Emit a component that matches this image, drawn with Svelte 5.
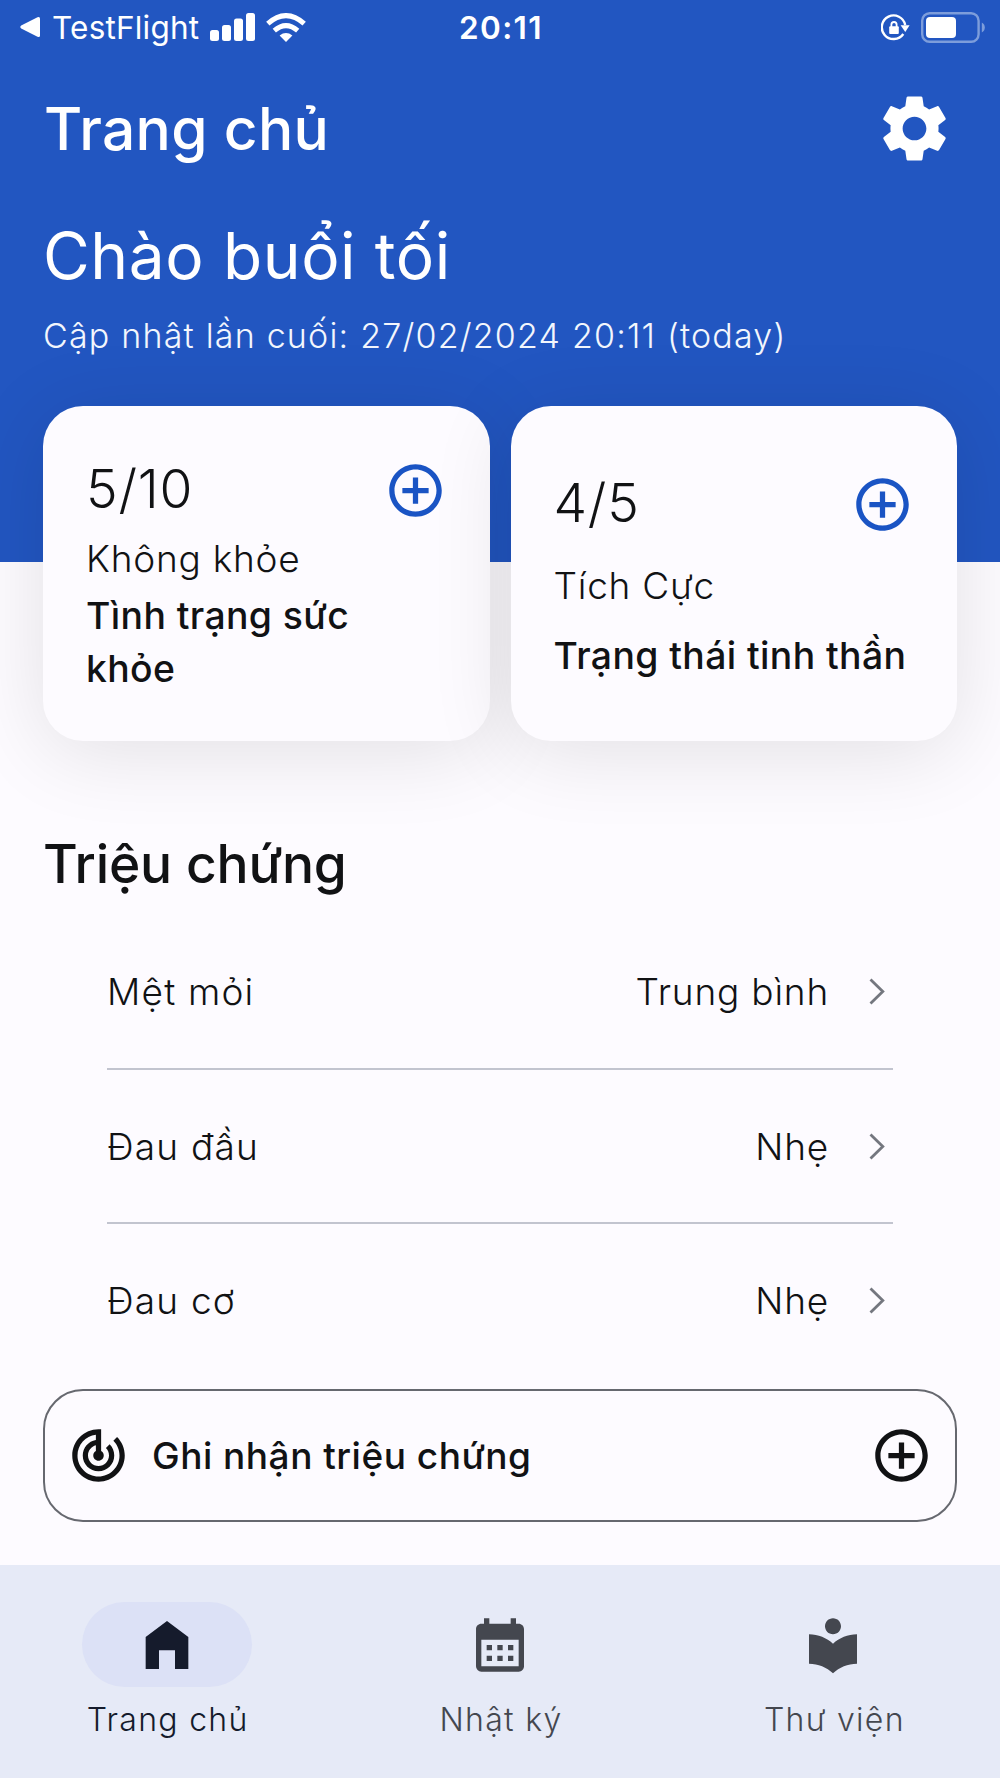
<script>
	const cards = [
		{ score: '5/10', status: 'Không khỏe', title: 'Tình trạng sức khỏe' },
		{ score: '4/5', status: 'Tích Cực', title: 'Trạng thái tinh thần' }
	];

	const symptoms = [
		{ name: 'Mệt mỏi', level: 'Trung bình' },
		{ name: 'Đau đầu', level: 'Nhẹ' },
		{ name: 'Đau cơ', level: 'Nhẹ' }
	];

	const tabs = [
		{ id: 'home', label: 'Trang chủ', icon: 'M12 3L4 9v12h5v-7h6v7h5V9z' },
		{
			id: 'diary',
			label: 'Nhật ký',
			icon: 'M19 4h-1V2h-2v2H8V2H6v2H5c-1.11 0-1.99.9-1.99 2L3 20a2 2 0 0 0 2 2h14c1.1 0 2-.9 2-2V6c0-1.1-.9-2-2-2zm0 16H5V10h14v10zM9 14H7v-2h2v2zm4 0h-2v-2h2v2zm4 0h-2v-2h2v2zm-8 4H7v-2h2v2zm4 0h-2v-2h2v2zm4 0h-2v-2h2v2z'
		},
		{
			id: 'library',
			label: 'Thư viện',
			icon: 'M12 11.55C9.64 9.35 6.48 8 3 8v11c3.48 0 6.64 1.35 9 3.55 2.36-2.19 5.52-3.55 9-3.55V8c-3.48 0-6.64 1.35-9 3.55zM12 8c1.66 0 3-1.34 3-3s-1.34-3-3-3-3 1.34-3 3 1.34 3 3 3z'
		}
	];

	let active = $state('home');
</script>

{#snippet addIcon()}
	<svg class="icon" viewBox="0 0 24 24" aria-hidden="true">
		<path d="M13 7h-2v4H7v2h4v4h2v-4h4v-2h-4V7zm-1-5C6.48 2 2 6.48 2 12s4.48 10 10 10 10-4.48 10-10S17.52 2 12 2zm0 18c-4.41 0-8-3.59-8-8s3.59-8 8-8 8 3.59 8 8-3.59 8-8 8z" />
	</svg>
{/snippet}

<div class="screen">
	<header class="hero">
		<div class="status-bar">
			<div class="status-left">
				<svg width="20" height="22" viewBox="0 0 20 22" aria-hidden="true">
					<path d="M1.2 9.6 17.5 1.2Q20 .2 20 2.6V19.4Q20 21.8 17.5 20.8L1.2 12.4Q-.6 11 1.2 9.6z" />
				</svg>
				<span class="back-app">TestFlight</span>
				<svg class="signal" width="45" height="28" viewBox="0 0 45 28" aria-hidden="true">
					<rect x="0" y="17" width="9" height="11" rx="2.5" />
					<rect x="12" y="12" width="9" height="16" rx="2.5" />
					<rect x="24" y="5.5" width="9" height="22.5" rx="2.5" />
					<rect x="36" y="0" width="9" height="28" rx="2.5" />
				</svg>
				<svg width="40" height="29" viewBox="0 0 40 29" aria-hidden="true">
					<path d="M20 29 13.6 22.4Q20 17.6 26.4 22.4z" />
					<path class="arc" d="M8.3 17.6Q20 7.6 31.7 17.6" />
					<path class="arc" d="M1.8 10.6Q20 -5.4 38.2 10.6" />
				</svg>
			</div>
			<span class="clock">20:11</span>
			<div class="status-right">
				<svg width="29" height="27" viewBox="0 0 29 27" aria-hidden="true">
					<path class="ring" d="M24.2 11A11.8 11.8 0 1 0 22.3 20" />
					<path d="M19.6 11.3h9L24.3 18z" />
					<rect x="8.2" y="12.2" width="9.6" height="7.8" rx="1" />
					<path class="shackle" d="M10.4 13v-2.4a2.6 2.6 0 0 1 5.2 0V13" />
				</svg>
				<svg width="64" height="31" viewBox="0 0 64 31" aria-hidden="true">
					<rect class="case" x="1.2" y="1.2" width="56.4" height="28.6" rx="7.5" />
					<rect x="5" y="5" width="30" height="21" rx="4" />
					<path class="nub" d="M60.8 10.5q3 1.6 3 5t-3 5z" />
				</svg>
			</div>
		</div>

		<div class="title-row">
			<h1>Trang chủ</h1>
			<svg class="gear" viewBox="0 0 24 24" aria-label="Cài đặt">
				<path d="M19.43 12.98c.04-.32.07-.64.07-.98s-.03-.66-.07-.98l2.11-1.65c.19-.15.24-.42.12-.64l-2-3.46c-.12-.22-.39-.3-.61-.22l-2.49 1c-.52-.4-1.08-.73-1.69-.98l-.38-2.65C14.46 2.18 14.25 2 14 2h-4c-.25 0-.46.18-.49.42l-.38 2.65c-.61.25-1.17.59-1.69.98l-2.49-1c-.23-.09-.49 0-.61.22l-2 3.46c-.13.22-.07.49.12.64l2.11 1.65c-.04.32-.07.65-.07.98s.03.66.07.98l-2.11 1.65c-.19.15-.24.42-.12.64l2 3.46c.12.22.39.3.61.22l2.49-1c.52.4 1.08.73 1.69.98l.38 2.65c.03.24.24.42.49.42h4c.25 0 .46-.18.49-.42l.38-2.65c.61-.25 1.17-.59 1.69-.98l2.49 1c.23.09.49 0 .61-.22l2-3.46c.12-.22.07-.49-.12-.64l-2.11-1.65zM12 15.7c-2.04 0-3.7-1.66-3.7-3.7s1.66-3.7 3.7-3.7 3.7 1.66 3.7 3.7-1.66 3.7-3.7 3.7z" />
			</svg>
		</div>

		<p class="greeting">Chào buổi tối</p>
		<p class="updated">Cập nhật lần cuối: 27/02/2024 20:11 (today)</p>
	</header>

	<section class="cards">
		{#each cards as card (card.title)}
			<article class="card">
				<div class="card-top">
					<span class="score">{card.score}</span>
					{@render addIcon()}
				</div>
				<p class="card-status">{card.status}</p>
				<h3>{card.title}</h3>
			</article>
		{/each}
	</section>

	<main class="symptoms">
		<h2>Triệu chứng</h2>
		<ul>
			{#each symptoms as s (s.name)}
				<li>
					<span>{s.name}</span>
					<span class="level">{s.level}</span>
					<svg class="chevron" width="16" height="27" viewBox="0 0 16 27" aria-hidden="true">
						<path d="M1.5 1.5 13.8 13.5 1.5 25.5" />
					</svg>
				</li>
			{/each}
		</ul>
		<button class="record">
			<svg class="icon" viewBox="0 0 24 24" aria-hidden="true">
				<path d="M19.07 4.93l-1.41 1.41C19.1 7.79 20 9.79 20 12c0 4.42-3.58 8-8 8s-8-3.58-8-8c0-4.08 3.05-7.44 7-7.93v2.02C8.16 6.57 6 9.03 6 12c0 3.31 2.69 6 6 6s6-2.69 6-6c0-1.66-.67-3.16-1.76-4.24l-1.41 1.41C15.55 9.9 16 10.9 16 12c0 2.21-1.79 4-4 4s-4-1.79-4-4c0-1.86 1.28-3.41 3-3.86v2.14c-.6.35-1 .98-1 1.72 0 1.1.9 2 2 2s2-.9 2-2c0-.74-.4-1.38-1-1.72V2h-1C6.48 2 2 6.48 2 12s4.48 10 10 10 10-4.48 10-10c0-2.76-1.12-5.26-2.93-7.07z" />
			</svg>
			<span>Ghi nhận triệu chứng</span>
			{@render addIcon()}
		</button>
	</main>

	<nav>
		{#each tabs as tab (tab.id)}
			<button class="tab" class:active={active === tab.id} onclick={() => (active = tab.id)}>
				<span class="pill">
					<svg class="icon" viewBox="0 0 24 24" aria-hidden="true"><path d={tab.icon} /></svg>
				</span>
				<span class="tab-label">{tab.label}</span>
			</button>
		{/each}
	</nav>
</div>

<style>
	:global(body) {
		background: #fdfbff;
	}

	.screen {
		display: flex;
		flex-direction: column;
		width: 1000px;
		height: 1778px;
		overflow: hidden;
		background: #fdfbff;
		color: #111214;
		font-family: Inter, 'Noto Sans', sans-serif;
		font-size: 37px;
		font-weight: 300;
		letter-spacing: 1.2px;
	}

	h1,
	h2,
	h3,
	p,
	ul {
		margin: 0;
		padding: 0;
	}

	svg {
		display: block;
		flex: none;
		fill: currentColor;
	}

	button {
		border: 0;
		background: none;
		color: inherit;
		font: inherit;
		letter-spacing: inherit;
	}

	.icon {
		width: 63px;
		height: 63px;
	}

	.hero {
		flex: none;
		height: 562px;
		background: #2256c1;
		color: #fff;
	}

	.status-bar {
		display: grid;
		grid-template-columns: 1fr auto 1fr;
		align-items: center;
		height: 54px;
		padding: 0 15px 0 20px;
	}

	.status-left,
	.status-right {
		display: flex;
		align-items: center;
	}

	.back-app {
		margin: 2px 11px 0 12px;
		font-size: 31.5px;
		font-weight: 400;
		line-height: 40px;
		letter-spacing: 0.2px;
	}

	.signal {
		margin-right: 11px;
	}

	.arc {
		fill: none;
		stroke: currentColor;
		stroke-width: 5;
	}

	.clock {
		margin: 1px 3px 0 0;
		font-size: 31.5px;
		font-weight: 600;
		letter-spacing: 1.4px;
	}

	.status-right {
		justify-content: flex-end;
		gap: 11px;
	}

	.ring {
		fill: none;
		stroke: currentColor;
		stroke-width: 2.4;
	}

	.shackle {
		fill: none;
		stroke: currentColor;
		stroke-width: 1.8;
	}

	.case {
		fill: none;
		stroke: #7d9ddb;
		stroke-width: 2.4;
	}

	.nub {
		fill: #7d9ddb;
	}

	.title-row {
		display: flex;
		align-items: center;
		justify-content: space-between;
		height: 149px;
		padding: 0 47.5px 0 44px;
	}

	h1 {
		font-size: 58.67px;
		font-weight: 500;
		letter-spacing: 0.3px;
	}

	.gear {
		width: 77px;
		height: 77px;
		margin-bottom: 1px;
	}

	.greeting {
		margin-top: 13px;
		padding-left: 43px;
		font-size: 64px;
		font-weight: 400;
		line-height: 80px;
		letter-spacing: 0.6px;
	}

	.updated {
		margin-top: 16px;
		padding-left: 43px;
		font-size: 34px;
		line-height: 48px;
		color: #f3f6fd;
	}

	.cards {
		display: grid;
		grid-template-columns: 1fr 1fr;
		gap: 21px;
		flex: none;
		height: 335px;
		margin-top: -156px;
		padding: 0 43px;
	}

	.card {
		position: relative;
		display: flex;
		flex-direction: column;
		justify-content: space-evenly;
		box-sizing: border-box;
		padding: 53px 43px 45px;
		border-radius: 40px;
		background: #fdfbff;
		box-shadow: 0 11px 84px rgba(0, 0, 0, 0.11);
	}

	.card-top {
		display: flex;
		align-items: center;
		justify-content: space-between;
		margin-bottom: 10px;
		color: #1a54c4;
	}

	.score {
		margin-top: -3px;
		color: #111214;
		font-size: 53.33px;
		line-height: 60px;
		letter-spacing: 0.8px;
	}

	.card-status {
		margin-bottom: 3px;
		line-height: 53.3px;
		letter-spacing: 0.75px;
	}

	h3 {
		font-size: 37.33px;
		font-weight: 500;
		line-height: 53.6px;
		letter-spacing: 0.4px;
	}

	.symptoms {
		display: flex;
		flex-direction: column;
		flex: 1;
		padding: 83px 43px 0;
	}

	h2 {
		font-size: 53.33px;
		font-weight: 500;
		line-height: 80px;
		letter-spacing: -0.2px;
	}

	ul {
		margin: 9px 64px 12px;
		list-style: none;
	}

	li {
		display: flex;
		align-items: center;
		box-sizing: border-box;
		height: 154.7px;
		padding: 3px 8px 0 0;
	}

	li + li {
		padding-top: 0;
		border-top: 2.5px solid #c2c4cf;
	}

	.level {
		margin-left: auto;
		letter-spacing: 0.8px;
	}

	.chevron {
		margin-left: 40px;
	}

	.chevron path {
		fill: none;
		stroke: #74777f;
		stroke-width: 2.8;
	}

	.record {
		display: flex;
		align-items: center;
		box-sizing: border-box;
		height: 133px;
		padding: 0 22px;
		border: 2.4px solid #66686f;
		border-radius: 40px;
		font-weight: 500;
		letter-spacing: 0.5px;
	}

	.record span {
		flex: 1;
		margin-left: 22px;
		text-align: left;
	}

	nav {
		display: grid;
		grid-template-columns: repeat(3, 1fr);
		flex: none;
		height: 213px;
		background: #e6eaf7;
	}

	.tab {
		display: flex;
		flex-direction: column;
		align-items: center;
		padding: 37px 0 0;
		color: #44474f;
	}

	.tab.active {
		color: #151b2c;
	}

	.pill {
		display: grid;
		place-items: center;
		width: 170px;
		height: 85px;
		border-radius: 43px;
	}

	.pill .icon {
		width: 64px;
		height: 64px;
	}

	.active .pill {
		background: #dce1f6;
	}

	.tab-label {
		margin-top: 12px;
		padding-left: 2px;
		font-size: 32px;
		line-height: 42px;
		letter-spacing: 1.3px;
	}
</style>
